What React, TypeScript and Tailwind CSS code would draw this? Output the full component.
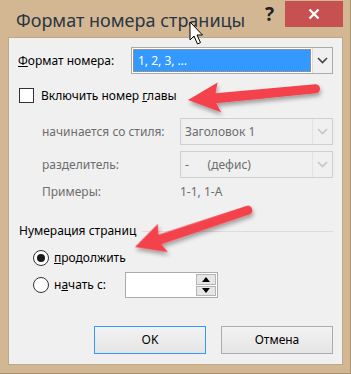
const font = { fontFamily: '"Noto Sans", "Open Sans", sans-serif' };

function Chevron({ color }: { color: string }) {
  return (
    <svg width="11" height="7" viewBox="0 0 11 7">
      <path d="M1 1 L5.5 5.5 L10 1" fill="none" stroke={color} strokeWidth="1.6" />
    </svg>
  );
}

function DisabledSelect({ value }: { value: React.ReactNode }) {
  return (
    <div className="flex h-full w-[153px] items-center border border-[#cfcfcf] bg-[#f0f0f0]">
      <div className="flex-1 pl-[4px] text-[#6d6d6d]">{value}</div>
      <div className="flex h-full w-[20px] items-center justify-center border-l border-[#e2e2e2]">
        <Chevron color="#c6c6c6" />
      </div>
    </div>
  );
}

function Radio({ checked }: { checked?: boolean }) {
  return (
    <div className="flex h-[16px] w-[16px] items-center justify-center rounded-full border border-[#333] bg-white">
      {checked && <div className="h-[8px] w-[8px] rounded-full bg-[#1a1a1a]" />}
    </div>
  );
}

function Arrows() {
  const shape =
    "M0 0 L31 -15 L28 -4.5 L128 -5 A4.5 4.5 0 0 1 128 4 L28 5.5 L32 15 Z";
  return (
    <svg className="pointer-events-none absolute left-0 top-0" width="351" height="374">
      <defs>
        <filter id="sh" x="-20%" y="-50%" width="140%" height="200%">
          <feDropShadow dx="1" dy="3" stdDeviation="2" floodColor="#000" floodOpacity="0.35" />
        </filter>
      </defs>
      <g filter="url(#sh)">
        <path d={shape} fill="#f3424b" transform="translate(188 100) rotate(-4.8)" />
        <path d={shape} fill="#f3424b" transform="translate(135 247) rotate(-17.8) scale(0.93 1)" />
      </g>
      {/* mouse cursor */}
      <path
        d="M190 22 L190 40 L194 36 L197.5 44 L200.5 42.6 L197 35 L202.5 35 Z"
        fill="#fff"
        stroke="#000"
        strokeWidth="1"
        strokeLinejoin="round"
      />
    </svg>
  );
}

export default function App() {
  return (
    <div
      className="relative h-[374px] w-[351px] overflow-hidden border-b border-r border-[#a8926f] bg-[#d3b793]"
      style={font}
    >
      {/* title bar */}
      <div className="flex h-[37px] items-start">
        <div className="whitespace-nowrap pl-[16px] pt-[8px] text-[18px] leading-[24px] text-[#2a3644]">
          Формат номера страницы
        </div>
        <div className="ml-auto pr-[11px] pt-[2px] text-[19px] font-bold leading-[24px] text-[#222]">?</div>
        <div className="mr-[7px] mt-[1px] flex h-[26px] w-[58px] items-center justify-center bg-[#c75050]">
          <svg width="12" height="12" viewBox="0 0 12 12">
            <path d="M1.5 1.5 L10.5 10.5 M10.5 1.5 L1.5 10.5" stroke="#fff" strokeWidth="2.4" />
          </svg>
        </div>
      </div>

      {/* client */}
      <div className="ml-[8px] flex h-[328px] w-[335px] flex-col border border-[#bba98c] bg-[#f0f0f0] px-[9px] text-[12px] text-black">
        <div className="mt-[9px] flex h-[27px] items-center">
          <div className="flex-1">
            <u>Ф</u>ормат номера:
          </div>
          <div className="flex h-full w-[202px] items-center border border-[#ababab] bg-white">
            <div className="m-[1px] flex h-[23px] flex-1 items-center border border-dotted border-[#e08a3c] bg-[#3399ff] pl-[4px] text-white">
              1, 2, 3, …
            </div>
            <div className="flex h-full w-[20px] items-center justify-center border-l border-[#dcdcdc] bg-[#f0f0f0]">
              <Chevron color="#444" />
            </div>
          </div>
        </div>

        <div className="mt-[14px] flex h-[15px] items-center">
          <div className="ml-[1px] h-[15px] w-[15px] border border-[#333] bg-white" />
          <div className="ml-[7px]">
            Включить номер <u>г</u>лавы
          </div>
        </div>

        <div className="mt-[15px] flex h-[27px] items-center text-[#6d6d6d]">
          <div className="flex-1 pl-[24px]">начинается со стиля:</div>
          <DisabledSelect value="Заголовок 1" />
        </div>

        <div className="mt-[6px] flex h-[27px] items-center text-[#6d6d6d]">
          <div className="flex-1 pl-[24px]">разделитель:</div>
          <DisabledSelect value={<span className="whitespace-pre">-      (дефис)</span>} />
        </div>

        <div className="mt-[4px] flex h-[20px] items-center text-[#6d6d6d]">
          <div className="flex-1 pl-[24px]">Примеры:</div>
          <div className="w-[153px]">1-1, 1-A</div>
        </div>

        <div className="mt-[19px] flex h-[20px] items-center">
          <div className="pl-[1px]">Нумерация страниц</div>
          <div className="ml-[6px] h-px flex-1 bg-[#dcdcdc]" />
        </div>

        <div className="mt-[7px] flex h-[20px] items-center pl-[15px]">
          <Radio checked />
          <div className="ml-[5px]">
            <u>п</u>родолжить
          </div>
        </div>

        <div className="mt-[4px] flex h-[26px] items-center pl-[15px]">
          <Radio />
          <div className="ml-[5px] w-[71px]">
            н<u>а</u>чать с:
          </div>
          <div className="flex h-full w-[93px] items-center justify-end border border-[#ababab] bg-white pr-[1px]">
            <div className="flex h-[22px] w-[20px] flex-col gap-[1px]">
              <div className="flex flex-1 items-center justify-center border border-[#b5b5b5] bg-[#e6e6e6]">
                <svg width="8" height="5" viewBox="0 0 8 5">
                  <path d="M0 5 L4 0 L8 5 Z" fill="#000" />
                </svg>
              </div>
              <div className="flex flex-1 items-center justify-center border border-[#b5b5b5] bg-[#e6e6e6]">
                <svg width="8" height="5" viewBox="0 0 8 5">
                  <path d="M0 0 L4 5 L8 0 Z" fill="#000" />
                </svg>
              </div>
            </div>
          </div>
        </div>

        <div className="mt-[28px] flex h-[28px] justify-end gap-[15px]">
          <div className="flex w-[112px] items-center justify-center border border-[#3399ff] bg-gradient-to-b from-[#f2f2f2] to-[#e5e5e5]">
            OK
          </div>
          <div className="flex w-[112px] items-center justify-center border border-[#acacac] bg-gradient-to-b from-[#f2f2f2] to-[#e5e5e5]">
            Отмена
          </div>
        </div>
      </div>

      <Arrows />
    </div>
  );
}
